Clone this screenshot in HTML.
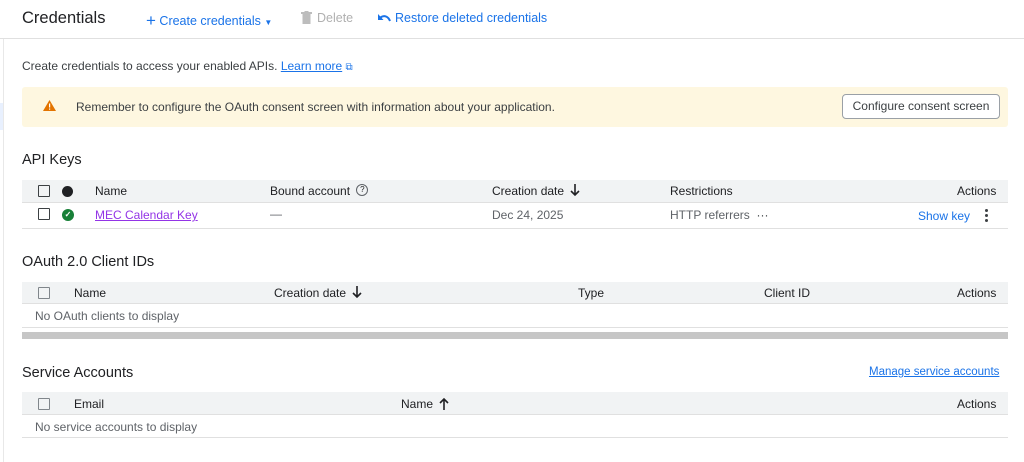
<!DOCTYPE html>
<html><head><meta charset="utf-8"><style>
*{box-sizing:border-box;margin:0;padding:0}
body{width:1024px;height:462px;overflow:hidden;background:#fff;font-family:"Liberation Sans",Arial,sans-serif;color:#202124;position:relative;font-size:12px}
.a{position:absolute;white-space:nowrap}
.blue{color:#1a73e8}
.th{position:absolute;left:22px;width:986px;background:#f1f3f4;border-bottom:1px solid #e0e0e0}
.rowb{position:absolute;left:22px;width:986px;border-bottom:1px solid #e0e0e0}
.cb{position:absolute;width:12px;height:12px;border:1.5px solid #3c4043;border-radius:1px}
.h{color:#202124;font-size:12px;line-height:14px}
.ar{display:inline-block;vertical-align:top;margin-left:6px}
</style></head><body>
<div class="a" style="left:3px;top:38px;width:1px;height:424px;background:#e8e8e8"></div>
<div class="a" style="left:0;top:103px;width:3px;height:27px;background:#e8f0fe"></div>
<div class="a" style="left:0;top:38px;width:1024px;height:1px;background:#e0e0e0"></div>
<div class="a" style="left:22px;top:9px;font-size:16.5px;color:#202124">Credentials</div>
<div class="a blue" style="left:146px;top:10px;font-size:12.5px"><span style="font-size:17px;position:relative;top:1px">+</span> Create credentials <span style="font-size:8px">▼</span></div>
<svg class="a" style="left:301px;top:11px" width="11" height="13" viewBox="0 0 11 13"><rect x="0" y="1" width="11" height="2" fill="#bdbdbd"/><rect x="3.5" y="0" width="4" height="2" fill="#bdbdbd"/><rect x="1.5" y="3" width="8" height="10" fill="#bdbdbd"/></svg>
<div class="a" style="left:317px;top:11px;font-size:12.5px;color:#b0b0b0">Delete</div>
<svg class="a" style="left:378px;top:13px" width="13" height="9" viewBox="0 0 13 9"><path d="M12 8 C10 3 6 2 2.5 4.5" stroke="#1a73e8" stroke-width="2" fill="none"/><path d="M0 1 L0 7 L5.5 7 Z" fill="#1a73e8"/></svg>
<div class="a blue" style="left:395px;top:11px;font-size:12.5px">Restore deleted credentials</div>
<div class="a" style="left:22px;top:59px;font-size:12px;color:#3c4043">Create credentials to access your enabled APIs. <span class="blue" style="text-decoration:underline">Learn more</span> <span class="blue" style="font-size:10px">⧉</span></div>
<div class="a" style="left:22px;top:87px;width:986px;height:40px;background:#fef7e0;border-radius:3px"></div>
<svg class="a" style="left:43px;top:100px" width="13" height="11" viewBox="0 0 13 11"><path d="M6.5 0 L13 11 L0 11 Z" fill="#e37400"/><rect x="6" y="3.5" width="1.2" height="4" fill="#fff"/><rect x="6" y="8.5" width="1.2" height="1.2" fill="#fff"/></svg>
<div class="a" style="left:76px;top:100px;font-size:12px;color:#3c4043">Remember to configure the OAuth consent screen with information about your application.</div>
<div class="a" style="left:842px;top:94px;width:158px;height:25px;border:1px solid #9aa0a6;border-radius:4px;background:#fff;font-size:12px;color:#3c4043;text-align:center;line-height:23px">Configure consent screen</div>

<div class="a" style="left:22px;top:152px;font-size:14.5px">API Keys</div>
<div class="th" style="top:180px;height:23px"></div>
<div class="cb" style="left:38px;top:185px"></div>
<div class="a" style="left:62px;top:186px;width:11px;height:11px;border-radius:50%;background:#202124"></div>
<div class="a h" style="left:95px;top:184px">Name</div>
<div class="a h" style="left:270px;top:184px">Bound account <span style="display:inline-block;width:12px;height:12px;border:1px solid #5f6368;border-radius:50%;font-size:8px;text-align:center;line-height:10px;vertical-align:top;margin-left:3px">?</span></div>
<div class="a h" style="left:492px;top:184px">Creation date<svg class="ar" width="10" height="13" viewBox="0 0 10 13"><path d="M5 0 V11 M1 7 L5 11 L9 7" stroke="#202124" stroke-width="1.6" fill="none"/></svg></div>
<div class="a h" style="left:670px;top:184px">Restrictions</div>
<div class="a h" style="left:957px;top:184px">Actions</div>
<div class="rowb" style="top:203px;height:26px"></div>
<div class="cb" style="left:38px;top:208px"></div>
<div class="a" style="left:62px;top:209px;width:12px;height:12px;border-radius:50%;background:#188038;color:#fff;font-size:8px;text-align:center;line-height:12px;font-weight:bold">✓</div>
<div class="a" style="left:95px;top:208px;color:#9334e6;text-decoration:underline;font-size:12px">MEC Calendar Key</div>
<div class="a" style="left:270px;top:207px;color:#5f6368">—</div>
<div class="a" style="left:492px;top:208px;color:#5f6368">Dec 24, 2025</div>
<div class="a" style="left:670px;top:208px;color:#5f6368">HTTP referrers &nbsp;<span style="color:#3c4043">···</span></div>
<div class="a blue" style="left:918px;top:209px;font-size:12px">Show key</div>
<div class="a" style="left:985px;top:209px;width:3px;line-height:0">
<div style="width:3px;height:3px;border-radius:50%;background:#3c4043;margin-bottom:2px"></div><div style="width:3px;height:3px;border-radius:50%;background:#3c4043;margin-bottom:2px"></div><div style="width:3px;height:3px;border-radius:50%;background:#3c4043"></div></div>

<div class="a" style="left:22px;top:254px;font-size:14.5px">OAuth 2.0 Client IDs</div>
<div class="th" style="top:282px;height:22px"></div>
<div class="cb" style="left:38px;top:287px;border-color:#80868b"></div>
<div class="a h" style="left:74px;top:286px">Name</div>
<div class="a h" style="left:274px;top:286px">Creation date<svg class="ar" width="10" height="13" viewBox="0 0 10 13"><path d="M5 0 V11 M1 7 L5 11 L9 7" stroke="#202124" stroke-width="1.6" fill="none"/></svg></div>
<div class="a h" style="left:578px;top:286px">Type</div>
<div class="a h" style="left:764px;top:286px">Client ID</div>
<div class="a h" style="left:957px;top:286px">Actions</div>
<div class="rowb" style="top:304px;height:24px"></div>
<div class="a" style="left:35px;top:309px;color:#5f6368">No OAuth clients to display</div>
<div class="a" style="left:22px;top:332px;width:986px;height:7px;background:#c6c6c6"></div>

<div class="a" style="left:22px;top:365px;font-size:14.5px">Service Accounts</div>
<div class="a blue" style="left:869px;top:366px;text-decoration:underline;font-size:11.5px">Manage service accounts</div>
<div class="th" style="top:392px;height:23px"></div>
<div class="cb" style="left:38px;top:398px;border-color:#80868b"></div>
<div class="a h" style="left:74px;top:397px">Email</div>
<div class="a h" style="left:401px;top:397px">Name<svg class="ar" width="10" height="13" viewBox="0 0 10 13"><path d="M5 13 V2 M1 6 L5 2 L9 6" stroke="#202124" stroke-width="1.6" fill="none"/></svg></div>
<div class="a h" style="left:957px;top:397px">Actions</div>
<div class="rowb" style="top:415px;height:23px"></div>
<div class="a" style="left:35px;top:420px;color:#5f6368">No service accounts to display</div>
</body></html>
